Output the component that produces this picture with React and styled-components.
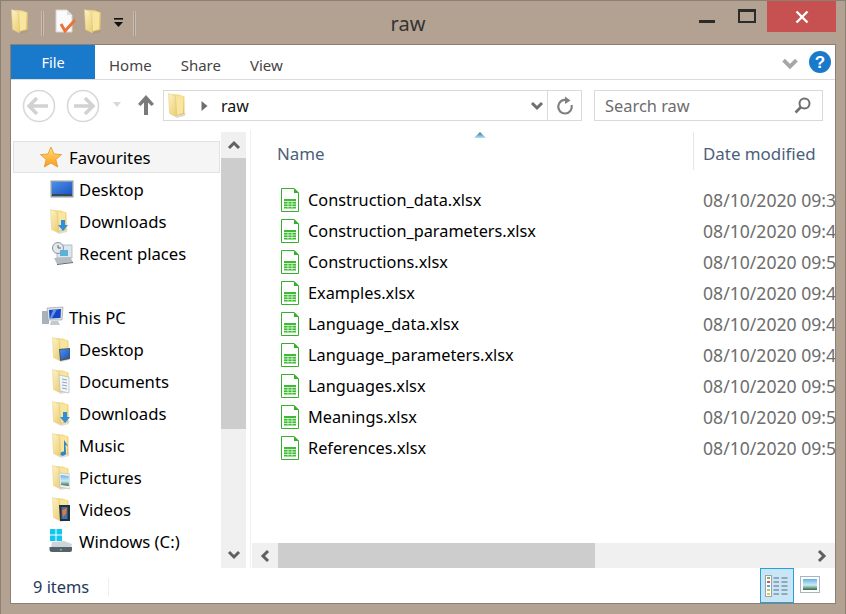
import React from "react";
import styled, { createGlobalStyle } from "styled-components";

const GlobalStyle = createGlobalStyle`
  html, body {
    margin: 0;
    padding: 0;
    background: #b3a292;
    overflow: hidden;
  }
  * { box-sizing: border-box; }
`;

const FONT = `"Noto Sans", "Open Sans", "Liberation Sans", sans-serif`;

const Window = styled.div`
  width: 846px;
  height: 614px;
  display: flex;
  flex-direction: column;
  background: #b3a292;
  border: 1px solid #8b8074;
  border-bottom: none;
  font-family: ${FONT};
  color: #000;
`;

const TitleBar = styled.div`
  height: 43px;
  display: flex;
  align-items: flex-start;
  flex: none;
`;

const QuickAccess = styled.div`
  width: 150px;
  height: 36px;
  padding: 8px 0 0 10px;
  display: flex;
  align-items: flex-start;
  flex: none;
`;

const QuickIcon = styled.div`
  display: flex;
  margin-left: ${(p) => p.$left || 0}px;
`;

const QuickSep = styled.div`
  width: 3px;
  height: 25px;
  margin: 2px 0 0 ${(p) => p.$left}px;
  background: #a09488;
  border-left: 1px solid #c9bdb1;
  border-right: 1px solid #c9bdb1;
`;

const Title = styled.div`
  flex: 1;
  text-align: center;
  font-size: 20px;
  line-height: 26px;
  padding: 10px 26px 0 0;
  color: #333;
`;

const Controls = styled.div`
  width: 146px;
  margin-right: 8px;
  flex: none;
  display: flex;
  align-items: flex-start;
`;

const Minimize = styled.div`
  width: 16px;
  height: 3px;
  margin: 19px 0 0 8px;
  background: #2b2b2b;
`;

const Maximize = styled.div`
  width: 18px;
  height: 14px;
  margin: 8px 0 0 23px;
  border: 2px solid #2b2b2b;
  border-top-width: 3px;
`;

const Close = styled.div`
  width: 69px;
  height: 31px;
  margin-left: 11px;
  background: #c75050;
  display: flex;
  align-items: center;
  justify-content: center;
`;

const Client = styled.div`
  width: 826px;
  height: 560px;
  margin-left: 9px;
  flex: none;
  display: flex;
  flex-direction: column;
  background: #fff;
  border: 1px solid #8b8074;
`;

const Ribbon = styled.div`
  height: 35px;
  flex: none;
  display: flex;
  align-items: stretch;
  border-bottom: 1px solid #dadbdc;
`;

const FileTab = styled.div`
  width: 84px;
  height: 34px;
  background: #1979ca;
  color: #fff;
  font-size: 14.5px;
  line-height: 34px;
  text-align: center;
`;

const Tab = styled.div`
  font-size: 15px;
  line-height: 40px;
  color: #444;
  margin-left: ${(p) => p.$left}px;
`;

const RibbonRight = styled.div`
  margin-left: auto;
  display: flex;
  align-items: flex-start;
  gap: 10px;
  padding: 6px 4px 0 0;
`;

const AddressRow = styled.div`
  height: 50px;
  flex: none;
  display: flex;
  align-items: flex-start;
  padding: 10px 12px 0 11px;
`;

const NavButton = styled.div`
  display: flex;
  margin: ${(p) => p.$margin};
`;

const AddressBox = styled.div`
  width: 419px;
  height: 31px;
  margin-left: 7px;
  display: flex;
  align-items: center;
  border: 1px solid #d9d9d9;
  font-size: 16px;
  padding-left: 4px;
`;

const CrumbArrow = styled.div`
  display: flex;
  margin-left: 15px;
`;

const Crumb = styled.span`
  margin-left: 13px;
  flex: 1;
  line-height: 28px;
  color: #111;
`;

const AddressEnd = styled.div`
  width: 34px;
  height: 29px;
  border-left: 1px solid #d9d9d9;
  display: flex;
  align-items: center;
  justify-content: center;
`;

const SearchBox = styled.div`
  width: 229px;
  height: 31px;
  margin-left: 12px;
  display: flex;
  align-items: center;
  justify-content: space-between;
  padding: 0 11px 0 10px;
  border: 1px solid #d9d9d9;
  font-size: 16.4px;
  color: #6d6d6d;
`;

const Body = styled.div`
  height: 438px;
  flex: none;
  display: flex;
`;

const Sidebar = styled.div`
  width: 210px;
  flex: none;
  padding: 11px 1px 0 2px;
  overflow: hidden;
`;

const NavRow = styled.div`
  height: 32px;
  display: flex;
  align-items: center;
  padding-left: ${(p) => p.$indent}px;
  font-size: 16.7px;
  white-space: nowrap;
  background: ${(p) => (p.$active ? "#f5f5f5" : "transparent")};
  border: 1px solid ${(p) => (p.$active ? "#e2e2e2" : "transparent")};
`;

const NavIcon = styled.div`
  width: ${(p) => p.$width || 32}px;
  height: 24px;
  display: flex;
  align-items: center;
  flex: none;
`;

const NavSpacer = styled.div`
  height: 32px;
`;

const VScroll = styled.div`
  width: 25px;
  flex: none;
  display: flex;
  flex-direction: column;
  background: #f0f0f0;
  margin-top: 2px;
`;

const ScrollButton = styled.div`
  width: ${(p) => p.$size}px;
  height: ${(p) => (p.$horizontal ? 25 : p.$size + 1)}px;
  flex: none;
  display: flex;
  align-items: center;
  justify-content: center;
`;

const VThumb = styled.div`
  height: 271px;
  flex: none;
  background: #cdcdcd;
`;

const Fill = styled.div`
  flex: 1;
`;

const Splitter = styled.div`
  width: 5px;
  flex: none;
  border-right: 1px solid #f0f0f0;
`;

const Main = styled.div`
  flex: 1;
  min-width: 0;
  display: flex;
  flex-direction: column;
  position: relative;
`;

const SortArrow = styled.div`
  position: absolute;
  left: 223px;
  top: 2px;
  display: flex;
`;

const ColumnHeader = styled.div`
  height: 54px;
  flex: none;
  display: flex;
  padding-top: 2px;
  font-size: 16.9px;
  color: #4c607a;
`;

const NameHead = styled.div`
  width: 443px;
  height: 38px;
  padding-left: 26px;
  line-height: 43px;
  border-right: 1px solid #e3e8ee;
  flex: none;
`;

const DateHead = styled.div`
  padding-left: 9px;
  line-height: 43px;
  white-space: nowrap;
`;

const FileList = styled.div`
  flex: 1;
  overflow: hidden;
`;

const FileRow = styled.div`
  height: 31px;
  display: flex;
  align-items: center;
  white-space: nowrap;
  overflow: hidden;
`;

const FileIcon = styled.div`
  width: 57px;
  padding-left: 30px;
  flex: none;
  display: flex;
`;

const FileName = styled.div`
  width: 395px;
  flex: none;
  font-size: 16.3px;
`;

const FileDate = styled.div`
  font-size: 17.6px;
  color: #6d6d6d;
`;

const HScroll = styled.div`
  height: 25px;
  flex: none;
  display: flex;
  background: #f0f0f0;
  margin-left: 1px;
`;

const HThumb = styled.div`
  width: 317px;
  flex: none;
  background: #cdcdcd;
`;

const StatusBar = styled.div`
  flex: 1;
  display: flex;
  align-items: stretch;
`;

const ItemCount = styled.div`
  width: 76px;
  height: 18px;
  margin: 10px 0 0 22px;
  border-right: 1px solid #eeeeee;
  font-size: 16.4px;
  line-height: 18px;
  color: #1e395b;
`;

const ViewButtons = styled.div`
  margin-left: auto;
  display: flex;
  align-items: flex-start;
  padding-right: 15px;
`;

const ViewButton = styled.div`
  width: 34px;
  height: 35px;
  display: flex;
  align-items: center;
  justify-content: center;
  background: ${(p) => (p.$active ? "#c9e6f6" : "transparent")};
  border: ${(p) => (p.$active ? "1px solid #26a0da" : "none")};
`;

const ViewThumb = styled.div`
  display: flex;
  margin: 8px 0 0 6px;
`;

// shared gradients used by every folder icon
const Defs = () => (
  <svg width="0" height="0" style={{ position: "absolute" }}>
    <defs>
      <linearGradient id="fold" x1="0" y1="0" x2="0.6" y2="1">
        <stop offset="0" stopColor="#fdf3c4" />
        <stop offset="1" stopColor="#eed27e" />
      </linearGradient>
      <linearGradient id="back" x1="0" y1="0" x2="0" y2="1">
        <stop offset="0" stopColor="#f5dd8c" />
        <stop offset="1" stopColor="#e6bf58" />
      </linearGradient>
      <linearGradient id="screen" x1="0" y1="0" x2="1" y2="1">
        <stop offset="0" stopColor="#4c8fe8" />
        <stop offset="1" stopColor="#1c56c4" />
      </linearGradient>
      <linearGradient id="star" x1="0" y1="0" x2="0" y2="1">
        <stop offset="0" stopColor="#ffe27a" />
        <stop offset="1" stopColor="#fb9a1c" />
      </linearGradient>
      <linearGradient id="sky" x1="0" y1="0" x2="0" y2="1">
        <stop offset="0" stopColor="#5fb4e8" />
        <stop offset="0.55" stopColor="#cfeaf5" />
        <stop offset="1" stopColor="#2f6a3c" />
      </linearGradient>
      <linearGradient id="sort" x1="0" y1="0" x2="0" y2="1">
        <stop offset="0" stopColor="#2e6f9e" />
        <stop offset="1" stopColor="#b5e0f5" />
      </linearGradient>
    </defs>
  </svg>
);

const Folder = ({ width = 18, height = 25, children }) => (
  <svg width={width} height={height} viewBox="0 0 18 25">
    <path d="M6 22 L17.5 20 L17 23 L9 25 Z" fill="#8f8f8f" opacity="0.3" />
    <path d="M3 1 L11 1.5 L16.5 3.5 V21 L7 23 Z" fill="url(#back)" />
    <path d="M0.5 0.5 L7 2.5 L8.5 24 L1.5 20.5 Z" fill="url(#fold)" stroke="#e3cb85" strokeWidth="0.5" />
    <path d="M8 3 L15 3.5 L15 20 L9 22 Z" fill="#f8e59f" />
    {children}
  </svg>
);

const Overlays = {
  down: (
    <path d="M11 11 H15 V16 H18 L13 22 L8 16 H11 Z" fill="#2f8fdc" />
  ),
  screen: (
    <g>
      <path d="M7 12 L18 11 V22 L8 24 Z" fill="#4a5a6a" />
      <path d="M8 13 L17 12 V20 L9 22 Z" fill="url(#screen)" />
    </g>
  ),
  doc: (
    <g>
      <path d="M7 6 L17 8 V24 L8 22 Z" fill="#f4f4f4" stroke="#aab2bc" strokeWidth="0.6" />
      <path d="M10 10 L15 11 M10 13 L15 14 M10 16 L15 17 M10 19 L15 20" stroke="#7fa0bc" strokeWidth="0.9" />
    </g>
  ),
  music: (
    <path d="M12 7 L16 13 L13.5 12 L14 20 C14 23 9 24 8.5 21 C8.3 19 11 18 12 19 Z" fill="#2c86c9" />
  ),
  picture: (
    <g>
      <path d="M7 8 L18 9 V24 L8 22 Z" fill="#f0f0f0" stroke="#b7bcc2" strokeWidth="0.6" />
      <path d="M8.5 10 L16.8 11 V21 L9 20 Z" fill="url(#sky)" />
    </g>
  ),
  video: (
    <g>
      <path d="M7 8 L18 8 V24 L8 24 Z" fill="#24313c" />
      <path d="M9.5 10 H15.5 V22 H9.5 Z" fill="#3d73b0" />
      <path d="M10 13 L15 11 L14 17 L11 20 Z" fill="#e0763a" />
    </g>
  ),
};

const NavFolder = ({ kind }) => <Folder>{Overlays[kind]}</Folder>;

const Star = () => (
  <svg width="24" height="24" viewBox="0 0 24 24">
    <path
      d="M12 2 L15 9 L22.5 9.6 L16.8 14.4 L18.7 22 L12 18 L5.3 22 L7.2 14.4 L1.5 9.6 L9 9 Z"
      fill="url(#star)"
      stroke="#e8912a"
      strokeWidth="0.8"
    />
  </svg>
);

const DesktopIcon = () => (
  <svg width="24" height="20" viewBox="0 0 24 20">
    <rect x="0.5" y="1.5" width="23" height="17" fill="#8d9db0" />
    <rect x="2" y="3" width="20" height="12" fill="url(#screen)" />
    <rect x="2" y="15" width="20" height="2" fill="#3b4651" />
  </svg>
);

const RecentIcon = () => (
  <svg width="24" height="24" viewBox="0 0 24 24">
    <rect x="7" y="4" width="15" height="13" fill="#dce6ee" stroke="#9aa8b4" strokeWidth="0.7" />
    <circle cx="8" cy="7" r="5.5" fill="#e4e8ec" stroke="#8a969f" />
    <path d="M8 4 V7 H11" stroke="#5a6670" fill="none" />
    <rect x="10" y="9" width="8" height="6" fill="#5fb0d8" />
    <path d="M4 17 L20 16 L23 21 L7 23 Z" fill="#b5bcc2" />
    <path d="M7 23 L23 21 V22 L7 24 Z" fill="#5f676e" />
  </svg>
);

const PcIcon = () => (
  <svg width="24" height="24" viewBox="0 0 24 24">
    <rect x="1" y="6" width="7" height="13" fill="#aab1b8" />
    <path d="M6 3 L22 2 L21 15 L7 15 Z" fill="#dfe3e7" stroke="#8f979e" strokeWidth="0.6" />
    <path d="M8 5 L20 4 L19.5 13 L8.5 13.5 Z" fill="#1446c4" />
    <path d="M12 5 L16 4.6 L11 13 L9 13 Z" fill="#79a8ee" opacity="0.8" />
    <path d="M10 16 H17 L19 20 H9 Z" fill="#c4c9ce" />
  </svg>
);

const DriveIcon = () => (
  <svg width="24" height="24" viewBox="0 0 24 24">
    <g fill="#12c6f2">
      <rect x="1" y="0" width="5.5" height="5.5" />
      <rect x="7.5" y="0" width="5.5" height="5.5" />
      <rect x="1" y="6.5" width="5.5" height="5.5" />
      <rect x="7.5" y="6.5" width="5.5" height="5.5" />
    </g>
    <path d="M3 13 L15 12 L23 15 L22 19 L2 19 Z" fill="#cfd4d8" />
    <path d="M0.5 18 H23 V21 Q23 23 21 23 H3 Q0.5 23 0.5 21 Z" fill="#54626d" />
    <rect x="11" y="20" width="2" height="1.5" fill="#58d06a" />
  </svg>
);

const SheetIcon = () => (
  <svg width="18" height="24" viewBox="0 0 18 24">
    <path d="M0.5 0.5 H13 L17.5 5 V23.5 H0.5 Z" fill="#fff" stroke="#35b02a" />
    <path d="M13 0 L18 5 H13 Z" fill="#35b02a" />
    <rect x="3" y="11" width="12" height="9.5" fill="#3dbb35" />
    <path d="M3 13.5 H15 M3 16 H15 M3 18.5 H15 M7 13.5 V20 M11 13.5 V20" stroke="#eaf9e6" strokeWidth="0.8" />
  </svg>
);

const DocCheck = () => (
  <svg width="21" height="25" viewBox="0 0 21 25">
    <path d="M1 1 H12 L17 6 V23 H1 Z" fill="#fafafa" stroke="#d3d3d3" />
    <path d="M12 1 L17 6 H12 Z" fill="#dddddd" />
    <path d="M6 15 L10 22 L20 11" fill="none" stroke="#e8743b" strokeWidth="3" />
  </svg>
);

const CircleArrow = ({ flip }) => (
  <svg width="34" height="34" viewBox="0 0 34 34">
    <circle cx="17" cy="17" r="15.5" fill="none" stroke="#d8d8d8" strokeWidth="1.6" />
    <path
      d={flip ? "M19 9 L27 17 L19 25 M27 17 H8" : "M15 9 L7 17 L15 25 M7 17 H26"}
      fill="none"
      stroke="#d2d2d2"
      strokeWidth="3.5"
    />
  </svg>
);

const Chevron = ({ dir = "down", size = 14, color = "#7a7a7a", weight = 3 }) => {
  const paths = {
    down: "M2 4 L7 9 L12 4",
    up: "M2 10 L7 5 L12 10",
    left: "M10 2 L5 7 L10 12",
    right: "M4 2 L9 7 L4 12",
  };
  return (
    <svg width={size} height={size} viewBox="0 0 14 14">
      <path d={paths[dir]} fill="none" stroke={color} strokeWidth={weight} />
    </svg>
  );
};

const ViewDetails = () => (
  <svg width="24" height="22" viewBox="0 0 24 22">
    <rect x="0.5" y="0.5" width="6" height="21" fill="#fff" stroke="#9aa3ac" />
    <rect x="2" y="2" width="3" height="2" fill="#7db07d" />
    <rect x="2" y="6" width="3" height="2" fill="#e84a4a" />
    <rect x="2" y="10" width="3" height="2" fill="#5b9ee0" />
    <rect x="2" y="14" width="3" height="2" fill="#b7cf4a" />
    <rect x="2" y="18" width="3" height="2" fill="#e0cf4a" />
    <path
      d="M8.5 3 H14 M16.5 3 H22.5 M8.5 7 H14 M16.5 7 H22.5 M8.5 11 H14 M16.5 11 H22.5 M8.5 15 H14 M16.5 15 H22.5 M8.5 19 H14 M16.5 19 H22.5"
      stroke="#5c6b78"
      strokeWidth="1.2"
    />
  </svg>
);

const ViewLarge = () => (
  <svg width="20" height="17" viewBox="0 0 20 17">
    <rect x="0.5" y="0.5" width="19" height="16" fill="#fff" stroke="#a9b4be" />
    <rect x="3" y="3" width="14" height="11" fill="url(#sky)" />
  </svg>
);

const favourites = [
  { label: "Desktop", icon: <DesktopIcon /> },
  { label: "Downloads", icon: <NavFolder kind="down" /> },
  { label: "Recent places", icon: <RecentIcon /> },
];

const libraries = [
  { label: "Desktop", kind: "screen" },
  { label: "Documents", kind: "doc" },
  { label: "Downloads", kind: "down" },
  { label: "Music", kind: "music" },
  { label: "Pictures", kind: "picture" },
  { label: "Videos", kind: "video" },
];

const files = [
  ["Construction_data.xlsx", "08/10/2020 09:37"],
  ["Construction_parameters.xlsx", "08/10/2020 09:41"],
  ["Constructions.xlsx", "08/10/2020 09:52"],
  ["Examples.xlsx", "08/10/2020 09:47"],
  ["Language_data.xlsx", "08/10/2020 09:43"],
  ["Language_parameters.xlsx", "08/10/2020 09:44"],
  ["Languages.xlsx", "08/10/2020 09:53"],
  ["Meanings.xlsx", "08/10/2020 09:54"],
  ["References.xlsx", "08/10/2020 09:55"],
];

export default function App() {
  return (
    <Window>
      <GlobalStyle />
      <Defs />
      <TitleBar>
        <QuickAccess>
          <QuickIcon><Folder /></QuickIcon>
          <QuickSep $left={12} />
          <QuickIcon $left={11}><DocCheck /></QuickIcon>
          <QuickIcon $left={8}><Folder /></QuickIcon>
          <QuickIcon $left={10}>
            <svg width="14" height="25" viewBox="0 0 14 25">
              <rect x="2" y="9" width="9" height="1.6" fill="#111" />
              <path d="M2 13 H11 L6.5 18 Z" fill="#111" />
            </svg>
          </QuickIcon>
          <QuickSep $left={7} />
        </QuickAccess>
        <Title>raw</Title>
        <Controls>
          <Minimize />
          <Maximize />
          <Close>
            <svg width="14" height="14" viewBox="0 0 14 14">
              <path d="M1.5 1.5 L12.5 12.5 M12.5 1.5 L1.5 12.5" stroke="#fff" strokeWidth="2.4" />
            </svg>
          </Close>
        </Controls>
      </TitleBar>

      <Client>
        <Ribbon>
          <FileTab>File</FileTab>
          <Tab $left={14}>Home</Tab>
          <Tab $left={29}>Share</Tab>
          <Tab $left={29}>View</Tab>
          <RibbonRight>
            <NavButton $margin="4px 0 0 0">
              <Chevron size={18} color="#a6a6a6" weight={3} />
            </NavButton>
            <svg width="22" height="22" viewBox="0 0 22 22">
              <circle cx="11" cy="11" r="11" fill="#1979ca" />
              <text x="11" y="17" textAnchor="middle" fontSize="17" fontWeight="700" fontFamily="Liberation Sans" fill="#fff">?</text>
            </svg>
          </RibbonRight>
        </Ribbon>

        <AddressRow>
          <NavButton $margin="-1px 0 0 0"><CircleArrow /></NavButton>
          <NavButton $margin="-1px 0 0 10px"><CircleArrow flip /></NavButton>
          <NavButton $margin="12px 0 0 12px">
            <svg width="10" height="6" viewBox="0 0 10 6"><path d="M1 0 H9 L5 5 Z" fill="#d8d8d8" /></svg>
          </NavButton>
          <NavButton $margin="3px 0 0 14px">
            <svg width="20" height="24" viewBox="0 0 20 24">
              <path d="M10 2 L18 11 L15.5 13 L12 9.5 V22 H8 V9.5 L4.5 13 L2 11 Z" fill="#7a7a7a" />
            </svg>
          </NavButton>
          <AddressBox>
            <Folder />
            <CrumbArrow>
              <svg width="7" height="12" viewBox="0 0 7 12"><path d="M0.5 1 L6.5 6 L0.5 11 Z" fill="#6e6e6e" /></svg>
            </CrumbArrow>
            <Crumb>raw</Crumb>
            <NavButton $margin="0 3px 0 0"><Chevron color="#6e6e6e" /></NavButton>
            <AddressEnd>
              <svg width="18" height="20" viewBox="0 0 18 20">
                <path d="M11 4.2 A6.8 6.8 0 1 0 15.6 9" fill="none" stroke="#808080" strokeWidth="2.2" />
                <path d="M9 0.5 L14.5 4.5 L9 8 Z" fill="#808080" />
              </svg>
            </AddressEnd>
          </AddressBox>
          <SearchBox>
            <span>Search raw</span>
            <svg width="17" height="17" viewBox="0 0 17 17">
              <circle cx="10.5" cy="6.5" r="5" fill="none" stroke="#707070" strokeWidth="2" />
              <path d="M7 10 L1.5 15.5" stroke="#707070" strokeWidth="2.6" />
            </svg>
          </SearchBox>
        </AddressRow>

        <Body>
          <Sidebar>
            <NavRow $active $indent={25}>
              <NavIcon $width={30}><Star /></NavIcon>
              Favourites
            </NavRow>
            {favourites.map((f) => (
              <NavRow key={f.label} $indent={36}>
                <NavIcon $width={29}>{f.icon}</NavIcon>
                {f.label}
              </NavRow>
            ))}
            <NavSpacer />
            <NavRow $indent={27}>
              <NavIcon $width={28}><PcIcon /></NavIcon>
              This PC
            </NavRow>
            {libraries.map((l) => (
              <NavRow key={l.kind} $indent={38}>
                <NavIcon $width={27}><NavFolder kind={l.kind} /></NavIcon>
                {l.label}
              </NavRow>
            ))}
            <NavRow $indent={35}>
              <NavIcon $width={30}><DriveIcon /></NavIcon>
              Windows (C:)
            </NavRow>
            <NavRow $indent={65}>Free area drive all</NavRow>
          </Sidebar>

          <VScroll>
            <ScrollButton $size={25}><Chevron dir="up" color="#606060" /></ScrollButton>
            <VThumb />
            <Fill />
            <ScrollButton $size={25}><Chevron color="#606060" /></ScrollButton>
          </VScroll>
          <Splitter />

          <Main>
            <SortArrow>
              <svg width="12" height="7" viewBox="0 0 12 7"><path d="M6 0 L12 6 H0 Z" fill="url(#sort)" /></svg>
            </SortArrow>
            <ColumnHeader>
              <NameHead>Name</NameHead>
              <DateHead>Date modified</DateHead>
            </ColumnHeader>
            <FileList>
              {files.map(([name, date]) => (
                <FileRow key={name}>
                  <FileIcon><SheetIcon /></FileIcon>
                  <FileName>{name}</FileName>
                  <FileDate>{date}</FileDate>
                </FileRow>
              ))}
            </FileList>
            <HScroll>
              <ScrollButton $size={26} $horizontal><Chevron dir="left" color="#606060" /></ScrollButton>
              <HThumb />
              <Fill />
              <ScrollButton $size={26} $horizontal><Chevron dir="right" color="#606060" /></ScrollButton>
            </HScroll>
          </Main>
        </Body>

        <StatusBar>
          <ItemCount>9 items</ItemCount>
          <ViewButtons>
            <ViewButton $active><ViewDetails /></ViewButton>
            <ViewThumb><ViewLarge /></ViewThumb>
          </ViewButtons>
        </StatusBar>
      </Client>
    </Window>
  );
}
